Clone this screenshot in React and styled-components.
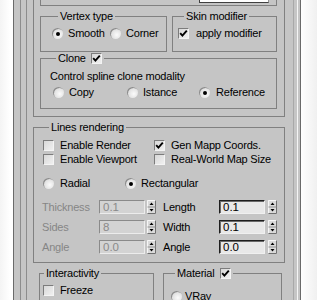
import React from "react";
import styled, { createGlobalStyle } from "styled-components";

const Global = createGlobalStyle`
  body {
    margin: 0;
    background: linear-gradient(90deg, #f4f4f4 0, #fff 10px, #fff 300px, #f0f0f0 317px);
    font-family: "Liberation Sans", Arial, sans-serif;
    font-size: 11px;
    letter-spacing: -0.2px;
  }
`;

const Window = styled.div`
  margin-left: 13px;
  width: 288px;
  height: 300px;
  box-sizing: border-box;
  background: #c5c5c5;
  border-left: 1px solid #6a6a6a;
  border-right: 1px solid #6a6a6a;
  padding: 0 2px 0 6px;
  overflow: hidden;
  display: flex;
`;

const Frame = styled.div`
  flex: 1;
  display: flex;
  border-left: 1px solid #8c8c8c;
  border-right: 1px solid #f4f4f4;
  padding: 0 3px 0 5px;
`;

const Panel = styled.div`
  flex: 1;
  display: flex;
  flex-direction: column;
  border-left: 1px solid #8c8c8c;
  border-right: 1px solid #a8a8a8;
  padding: 0 8px 0 6px;
`;

const Rollout = styled.div`
  border: 1px solid #808080;
  border-top: none;
  padding: 0 7px 7px 6px;
`;

const TopCut = styled.div`
  height: 6px;
  box-sizing: border-box;
  border: 1px solid #808080;
  border-top: none;
  display: flex;
  justify-content: flex-end;
  padding-right: 7px;
`;

const CutField = styled.div`
  width: 70px;
  height: 3px;
  box-sizing: border-box;
  background: #fff;
  border-left: 1px solid #404040;
  border-right: 1px solid #909090;
  border-bottom: 1px solid #404040;
`;

const Row = styled.div`
  display: flex;
  gap: ${p => p.$gap ?? 0}px;
  margin-top: ${p => p.$mt ?? 0}px;
  margin-left: ${p => p.$ml ?? 0}px;
  align-items: ${p => p.$top ? "flex-start" : "center"};
`;

const GroupBox = styled.fieldset`
  margin: ${p => p.$mt ?? 0}px 0 0 0;
  min-width: 0;
  box-sizing: border-box;
  border: 1px solid #808080;
  padding: ${p => p.$pad};
  width: ${p => (p.$w ? `${p.$w}px` : "auto")};
  flex: ${p => (p.$w ? "none" : 1)};
`;

const Legend = styled.legend`
  display: flex;
  align-items: center;
  gap: 5px;
  padding: 0 2px;
  margin-left: ${p => p.$off}px;
  height: ${p => p.$h ?? 13}px;
  line-height: 13px;
  color: #000;
`;

const Text = styled.div`
  height: 13px;
  line-height: 13px;
  white-space: nowrap;
`;

const Option = styled.label`
  display: flex;
  align-items: center;
  gap: ${p => p.$gap ?? 5}px;
  width: ${p => (p.$w ? `${p.$w}px` : "auto")};
  height: 13px;
  line-height: 13px;
  white-space: nowrap;
  color: #000;
`;

const RadioCircle = styled.span`
  width: 11px;
  height: 11px;
  flex: none;
  box-sizing: border-box;
  border-radius: 50%;
  background: radial-gradient(circle at 62% 62%, #fbfbfb 0, #e6e6e6 45%, #c9c9c9 100%);
  box-shadow: inset 1px 1px 0 #8c8c8c;
  display: flex;
  align-items: center;
  justify-content: center;
  &::after {
    content: "";
    width: 4px;
    height: 4px;
    border-radius: 50%;
    background: ${p => (p.$on ? "#000" : "transparent")};
  }
`;

const CheckSquare = styled.span`
  width: 11px;
  height: 11px;
  flex: none;
  box-sizing: border-box;
  background: linear-gradient(135deg, #d8d8d8, #f0f0f0);
  border-style: solid;
  border-width: 1px;
  border-color: #7c7c7c #f4f4f4 #f4f4f4 #7c7c7c;
  display: flex;
  align-items: center;
  justify-content: center;
`;

const Radio = ({ on }) => <RadioCircle $on={on} />;

const Check = ({ on }) => (
  <CheckSquare>
    {on && (
      <svg width="9" height="9" viewBox="0 0 9 9">
        <path d="M1.2 4.2 L3.4 6.6 L7.8 1.6" fill="none" stroke="#000" strokeWidth="1.9" />
      </svg>
    )}
  </CheckSquare>
);

const SpinLabel = styled.div`
  width: ${p => p.$w}px;
  flex: none;
  box-sizing: border-box;
  padding-left: ${p => p.$pl ?? 0}px;
  height: 14px;
  line-height: 14px;
  color: ${p => (p.$disabled ? "#858585" : "#000")};
`;

const Field = styled.div`
  width: 46px;
  height: 14px;
  flex: none;
  box-sizing: border-box;
  padding-left: 3px;
  line-height: 12px;
  font-size: 11.5px;
  letter-spacing: 0;
  background: ${p => (p.$disabled ? "#d3d3d3" : "#e8e8e8")};
  color: ${p => (p.$disabled ? "#8a8a8a" : "#000")};
  border-style: solid;
  border-width: 1px;
  border-color: ${p => (p.$disabled ? "#8a8a8a #ececec #ececec #8a8a8a" : "#1e1e1e #f0f0f0 #f0f0f0 #1e1e1e")};
  box-shadow: ${p => (p.$disabled ? "none" : "inset 1px 1px 0 #6a6a6a")};
`;

const SpinBox = styled.div`
  flex: none;
  margin-left: ${p => p.$ml}px;
  width: 9px;
  height: 14px;
`;

const Spinner = ({ ml }) => (
  <SpinBox $ml={ml}>
    <svg width="9" height="14" viewBox="0 0 9 14">
      <rect x="0" y="0" width="9" height="14" fill="#dadada" />
      <path d="M0.5 13 V0.5 H8.5" stroke="#f6f6f6" fill="none" />
      <path d="M0.5 13.5 H8.5 V0.5" stroke="#707070" fill="none" />
      <path d="M0.5 7 H8.5" stroke="#909090" />
      <path d="M2.5 5 L4.5 2.5 L6.5 5 Z" fill="#000" />
      <path d="M2.5 9 L4.5 11.5 L6.5 9 Z" fill="#000" />
    </svg>
  </SpinBox>
);

const SpinRow = ({ left, right, mt }) => (
  <Row $mt={mt} $ml={-1}>
    <SpinLabel $w={57} $disabled>{left.label}</SpinLabel>
    <Field $disabled>{left.value}</Field>
    <Spinner ml={2} />
    <SpinLabel $w={63} $pl={7}>{right.label}</SpinLabel>
    <Field>{right.value}</Field>
    <Spinner ml={3} />
  </Row>
);

export default function App() {
  return (
    <>
      <Global />
      <Window>
        <Frame>
          <Panel>
            <Rollout>
              <TopCut>
                <CutField />
              </TopCut>
              <Row $gap={5} $mt={4}>
                <GroupBox $w={127} $pad="4px 0 11px 11px">
                  <Legend $off={6}>Vertex type</Legend>
                  <Row>
                    <Option $w={58}><Radio on />Smooth</Option>
                    <Option><Radio />Corner</Option>
                  </Row>
                </GroupBox>
                <GroupBox $pad="4px 0 11px 5px">
                  <Legend $off={6}>Skin modifier</Legend>
                  <Option $gap={7}><Check on />apply modifier</Option>
                </GroupBox>
              </Row>
              <GroupBox $pad="6px 0 9px 9px">
                <Legend $off={6} $h={12}>Clone <Check on /></Legend>
                <Text>Control spline clone modality</Text>
                <Row $mt={3} $ml={3}>
                  <Option $w={74}><Radio />Copy</Option>
                  <Option $w={72}><Radio />Istance</Option>
                  <Option $gap={6}><Radio on />Reference</Option>
                </Row>
              </GroupBox>
            </Rollout>

            <GroupBox $mt={4} $pad="5px 0 8px 9px">
              <Legend $off={6}>Lines rendering</Legend>
              <Row>
                <Option $w={111} $gap={6}><Check />Enable Render</Option>
                <Option $gap={6}><Check on />Gen Mapp Coords.</Option>
              </Row>
              <Row $mt={1}>
                <Option $w={111} $gap={6}><Check />Enable Viewport</Option>
                <Option $gap={6}><Check />Real-World Map Size</Option>
              </Row>
              <Row $mt={11}>
                <Option $w={82} $gap={6}><Radio />Radial</Option>
                <Option $gap={5}><Radio on />Rectangular</Option>
              </Row>
              <SpinRow mt={10} left={{ label: "Thickness", value: "0.1" }} right={{ label: "Length", value: "0.1" }} />
              <SpinRow mt={6} left={{ label: "Sides", value: "8" }} right={{ label: "Width", value: "0.1" }} />
              <SpinRow mt={6} left={{ label: "Angle", value: "0.0" }} right={{ label: "Angle", value: "0.0" }} />
            </GroupBox>

            <Row $gap={9} $mt={4} $ml={6} $top>
              <GroupBox $w={115} $pad="4px 0 8px 3px">
                <Legend $off={1}>Interactivity</Legend>
                <Option $gap={6}><Check />Freeze</Option>
              </GroupBox>
              <GroupBox $w={119} $pad="11px 0 8px 7px">
                <Legend $off={4} $h={12}>Material <Check on /></Legend>
                <Option $gap={3}><Radio />VRay</Option>
              </GroupBox>
            </Row>
          </Panel>
        </Frame>
      </Window>
    </>
  );
}
